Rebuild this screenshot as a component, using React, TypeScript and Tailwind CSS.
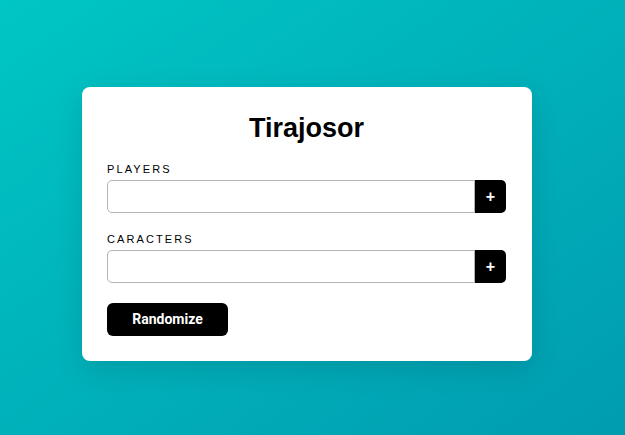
import React from 'react';

const Field = ({ label }: { label: string }) => (
    <div className="flex flex-col">
        <label className="text-[11px] leading-[13px] tracking-[2.1px] text-black mb-[4px]">{label}</label>
        <div className="flex h-[33px]">
            <input className="flex-1 min-w-0 border border-[#b3b3b3] rounded-l-[5px] px-2 outline-none bg-white" />
            <button className="w-[31px] bg-black text-white rounded-r-[5px] flex items-center justify-center text-[16px] font-bold">
                +
            </button>
        </div>
    </div>
);

export default function App() {
    return (
        <div className="w-full h-[435px] bg-gradient-to-br from-[#00c6c4] to-[#009cb0] pt-[87px] pl-[82px] font-['Liberation_Sans',Arial,sans-serif]">
            <div className="w-[450px] bg-white rounded-[8px] shadow-[0_8px_30px_rgba(0,0,0,0.12)] pl-[25px] pr-[26px] pt-[26px] pb-[25px]">
                <h1 className="text-center text-[27px] leading-[31px] font-bold text-black mb-[19px]">Tirajosor</h1>
                <div className="flex flex-col gap-[20px]">
                    <Field label="PLAYERS" />
                    <Field label="CARACTERS" />
                </div>
                <button className="mt-[20px] w-[121px] h-[33px] bg-black text-white rounded-[6px] text-[14px] font-bold font-['Roboto',sans-serif]">
                    Randomize
                </button>
            </div>
        </div>
    );
}
